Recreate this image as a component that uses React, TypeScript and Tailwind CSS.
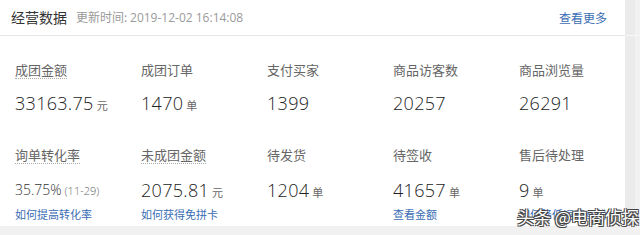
import React from 'react';

type Cell = {
  label: string;
  dotted?: boolean;
  value: string;
  unit?: string;
  small?: boolean;
  note?: string;
  link?: string;
};

const rowOne: Cell[] = [
  { label: '成团金额', dotted: true, value: '33163.75', unit: '元' },
  { label: '成团订单', value: '1470', unit: '单' },
  { label: '支付买家', value: '1399' },
  { label: '商品访客数', value: '20257' },
  { label: '商品浏览量', value: '26291' },
];

const rowTwo: Cell[] = [
  { label: '询单转化率', dotted: true, value: '35.75%', small: true, note: '(11-29)', link: '如何提高转化率' },
  { label: '未成团金额', dotted: true, value: '2075.81', unit: '元', link: '如何获得免拼卡' },
  { label: '待发货', value: '1204', unit: '单' },
  { label: '待签收', value: '41657', unit: '单', link: '查看金额' },
  { label: '售后待处理', value: '9', unit: '单', link: '如何降低运费纠纷' },
];

const font = "font-['Microsoft_YaHei','Noto_Sans_CJK_SC',sans-serif]";
const digits = "font-['Segoe_UI','Open_Sans','Noto_Sans_CJK_SC',sans-serif]";

const StatCell: React.FC<{ cell: Cell; gap: string }> = ({ cell, gap }) => (
  <div className="flex flex-col items-start">
    <span
      className={`h-[18px] text-[13px] leading-[18px] text-[#666] ${
        cell.dotted ? 'border-b border-dotted border-[#aaa]' : ''
      }`}
    >
      {cell.label}
    </span>
    <div className={`${gap} flex h-[24px] items-baseline gap-[3px] leading-[24px]`}>
      <span
        className={`${digits} font-light ${
          cell.small ? 'text-[14px] text-[#333]' : 'text-[18px] tracking-[0.3px] text-[#222]'
        }`}
      >
        {cell.value}
      </span>
      {cell.note && <span className={`${digits} font-light text-[11px] text-[#666]`}>{cell.note}</span>}
      {cell.unit && <span className="text-[11px] text-[#666]">{cell.unit}</span>}
    </div>
    {cell.link && (
      <a className="mt-[4px] h-[16px] cursor-pointer text-[11px] leading-[16px] text-[#3a6db3]">{cell.link}</a>
    )}
  </div>
);

export default function App() {
  return (
    <div className={`relative flex h-[235px] w-[640px] flex-col overflow-hidden bg-[#f1f1f1] ${font}`}>
      <div className="flex h-[226px]">
        {/* panel */}
        <div className="w-[625px] bg-white">
          <div className="flex h-[36px] items-center border-b border-[#e6e6e6] pl-[11px] pr-[18px]">
            <span className="text-[14px] text-[#333]">经营数据</span>
            <span className="ml-[9px] text-[12px] text-[#9a9a9a]">
              更新时间: <span className={digits}>2019-12-02 16:14:08</span>
            </span>
            <a className="ml-auto cursor-pointer text-[12px] text-[#3a6db3]">查看更多</a>
          </div>

          <div className="grid grid-cols-[repeat(5,126px)] pl-[15px] pt-[25px]">
            {rowOne.map((c) => (
              <StatCell key={c.label} cell={c} gap="mt-[12px]" />
            ))}
          </div>

          <div className="mt-[31px] grid grid-cols-[repeat(5,126px)] pl-[15px]">
            {rowTwo.map((c) => (
              <StatCell key={c.label} cell={c} gap="mt-[14px]" />
            ))}
          </div>
        </div>

        {/* scroll gutter */}
        <div className="flex w-[15px] flex-col">
          <div className="h-[35px] w-[10px] bg-[#ebebeb]" />
          <div className="h-px w-[15px] bg-[#f8f8f8]" />
          <div className="flex-1 w-[10px] bg-[#ebebeb]" />
        </div>
      </div>

      {/* watermark */}
      <div className="absolute left-[517px] top-[206px] text-[17px] leading-[22px] text-white [text-shadow:1px_1px_0_#444,-1px_-1px_0_#444,1px_-1px_0_#444,-1px_1px_0_#444]">
        头条 @电商侦探
      </div>
    </div>
  );
}
